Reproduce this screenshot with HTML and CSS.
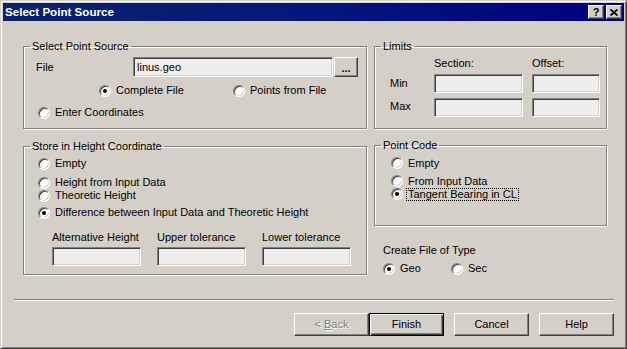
FILE: index.html
```html
<!DOCTYPE html>
<html>
<head>
<meta charset="utf-8">
<link rel="stylesheet" href="styles.css">
</head>
<body>
<div class="window">
  <div class="titlebar">
    <span class="title">Select Point Source</span>
    <div class="caption-btns">
      <span class="cbtn help">?</span>
      <span class="cbtn close"><svg width="8" height="7" viewBox="0 0 8 7"><path d="M0.5 0.5 L7.5 6.5 M7.5 0.5 L0.5 6.5" stroke="#000" stroke-width="1.7" fill="none"/></svg></span>
    </div>
  </div>
  <div class="body">
    <div class="columns">
      <div class="col left">
        <fieldset class="group g-source">
          <legend>Select Point Source</legend>
          <div class="file-row">
            <span class="file-label">File</span>
            <span class="edit file-edit">linus.geo</span>
            <span class="btn browse">...</span>
          </div>
          <div class="opt-row src-opts">
            <label class="opt w-complete"><span class="radio checked"></span><span class="lbl">Complete File</span></label>
            <label class="opt"><span class="radio"></span><span class="lbl">Points from File</span></label>
          </div>
          <div class="opt-row enter-opt">
            <label class="opt"><span class="radio"></span><span class="lbl">Enter Coordinates</span></label>
          </div>
        </fieldset>
        <fieldset class="group g-height">
          <legend>Store in Height Coordinate</legend>
          <div class="opt-row h1"><label class="opt"><span class="radio"></span><span class="lbl">Empty</span></label></div>
          <div class="opt-row h2"><label class="opt"><span class="radio"></span><span class="lbl">Height from Input Data</span></label></div>
          <div class="opt-row h3"><label class="opt"><span class="radio"></span><span class="lbl">Theoretic Height</span></label></div>
          <div class="opt-row h4"><label class="opt"><span class="radio checked"></span><span class="lbl">Difference between Input Data and Theoretic Height</span></label></div>
          <div class="tol-grid">
            <span class="tol-label">Alternative Height</span>
            <span class="tol-label">Upper tolerance</span>
            <span class="tol-label">Lower tolerance</span>
            <span class="edit tol-edit"></span>
            <span class="edit tol-edit"></span>
            <span class="edit tol-edit"></span>
          </div>
        </fieldset>
      </div>
      <div class="col right">
        <fieldset class="group g-limits">
          <legend>Limits</legend>
          <div class="limits-grid">
            <span></span>
            <span class="lim-head">Section:</span>
            <span class="lim-head">Offset:</span>
            <span class="lim-label">Min</span>
            <span class="edit lim-edit"></span>
            <span class="edit lim-edit"></span>
            <span class="lim-label">Max</span>
            <span class="edit lim-edit"></span>
            <span class="edit lim-edit"></span>
          </div>
        </fieldset>
        <fieldset class="group g-code">
          <legend>Point Code</legend>
          <div class="opt-row c1"><label class="opt"><span class="radio"></span><span class="lbl">Empty</span></label></div>
          <div class="opt-row c2"><label class="opt"><span class="radio"></span><span class="lbl">From Input Data</span></label></div>
          <div class="opt-row c3"><label class="opt"><span class="radio checked"></span><span class="lbl focus">Tangent Bearing in CL</span></label></div>
        </fieldset>
        <div class="create">
          <div class="create-title">Create File of Type</div>
          <div class="opt-row create-opts">
            <label class="opt w-geo"><span class="radio checked"></span><span class="lbl">Geo</span></label>
            <label class="opt"><span class="radio"></span><span class="lbl">Sec</span></label>
          </div>
        </div>
      </div>
    </div>
    <div class="sep"></div>
    <div class="buttons">
      <span class="btn push disabled"><span>&lt; <u>B</u>ack</span></span>
      <span class="btn push default">Finish</span>
      <span class="btn push">Cancel</span>
      <span class="btn push">Help</span>
    </div>
  </div>
</div>
</body>
</html>
```

FILE: styles.css
```css
* { box-sizing: border-box; }
html, body { margin: 0; padding: 0; background: #d4d0c8; }
body {
  font-family: "Liberation Sans", Arial, sans-serif;
  font-size: 11px;
  line-height: 13px;
  color: #000;
}
.window {
  width: 627px;
  height: 349px;
  border: 1px solid;
  border-color: #d4d0c8 #404040 #404040 #d4d0c8;
  box-shadow: inset 1px 1px 0 #fff, inset -1px -1px 0 #808080;
  padding: 2px;
  background: #d4d0c8;
  display: flex;
  flex-direction: column;
}
.titlebar {
  height: 18px;
  background: linear-gradient(to right, #0a246a, #04197a 45%, #000080);
  display: flex;
  align-items: center;
  justify-content: space-between;
  padding: 0 2px 0 2px;
}
.title {
  color: #fff;
  font-weight: bold;
  font-size: 11.6px;
  line-height: 18px;
}
.caption-btns { display: flex; gap: 2px; }
.cbtn {
  width: 16px;
  height: 14px;
  background: #d4d0c8;
  border: 1px solid;
  border-color: #fff #404040 #404040 #fff;
  box-shadow: inset -1px -1px 0 #808080;
  display: flex;
  align-items: center;
  justify-content: center;
  font-weight: bold;
  font-size: 11px;
  line-height: 12px;
}
.body {
  flex: 1;
  padding: 19px 10px 0 11px;
  display: flex;
  flex-direction: column;
}
.columns {
  height: 235px;
  padding-left: 9px;
  display: flex;
  gap: 7px;
}
.col { display: flex; flex-direction: column; }
.col.left { width: 344px; gap: 11px; }
.col.right { width: 233px; gap: 10px; }

.group {
  margin: 0;
  padding: 0;
  border: 1px solid #808080;
  box-shadow: inset 1px 1px 0 #fff, 1px 1px 0 #fff;
  min-width: 0;
}
.group legend {
  margin-left: 6px;
  padding: 0 2px;
  line-height: 13px;
  height: 13px;
}
.g-source { height: 89px; }
.g-height { height: 135px; }
.g-limits { height: 89px; }
.g-code { height: 88px; }

.edit {
  display: block;
  background: #eeeeee;
  border: 1px solid;
  border-color: #808080 #fff #fff #808080;
  box-shadow: inset 1px 1px 0 #404040, inset -1px -1px 0 #d4d0c8;
}
.btn {
  display: flex;
  align-items: center;
  justify-content: center;
  background: #d4d0c8;
  border: 1px solid;
  border-color: #fff #404040 #404040 #fff;
  box-shadow: inset -1px -1px 0 #808080;
}

.file-row {
  margin-top: 4px;
  height: 20px;
  display: flex;
  align-items: center;
}
.file-label { width: 109px; padding-left: 12px; }
.file-edit {
  width: 200px;
  height: 20px;
  padding: 3px 0 0 3px;
}
.browse {
  margin-left: 1px;
  width: 24px;
  height: 20px;
  font-weight: bold;
  font-size: 11px;
  padding-top: 2px;
  letter-spacing: 0;
}

.opt-row { height: 13px; display: flex; align-items: center; }
.opt { display: flex; align-items: center; }
.radio {
  position: relative;
  width: 12px;
  height: 12px;
  flex: none;
  border-radius: 50%;
  background: #fff;
  border: 1px solid;
  border-color: #808080 #fff #fff #808080;
  box-shadow: inset 1px 1px 0 #404040, inset -1px -1px 0 #d4d0c8;
}
.radio.checked::after {
  content: "";
  position: absolute;
  left: 3px;
  top: 3px;
  width: 4px;
  height: 4px;
  border-radius: 50%;
  background: #000;
}
.lbl {
  margin-left: 3px;
  border: 1px solid transparent;
  padding: 0 1px;
  line-height: 11px;
  white-space: nowrap;
}
.lbl.focus { border: 1px dotted #000; }

.src-opts { margin-top: 7px; padding-left: 75px; }
.w-complete { width: 134px; }
.enter-opt { margin-top: 9px; padding-left: 14px; }

.h1 { margin-top: 4px; padding-left: 14px; }
.h2 { margin-top: 6px; padding-left: 14px; }
.h3 { margin-top: 0; padding-left: 14px; }
.h4 { margin-top: 4px; padding-left: 14px; }
.tol-grid {
  margin-top: 12px;
  padding-left: 28px;
  display: grid;
  grid-template-columns: 89px 89px 89px;
  grid-template-rows: 13px 19px;
  column-gap: 16px;
  row-gap: 3px;
}
.tol-edit { height: 19px; }

.limits-grid {
  margin-top: 4px;
  display: grid;
  grid-template-columns: 50px 89px 68px;
  grid-template-rows: 13px 19px 19px;
  column-gap: 9px;
  row-gap: 4px;
}
.limits-grid .lim-edit:nth-child(n+8) { margin-top: 1px; }
.lim-label { padding-left: 15px; align-self: center; }
.lim-edit { height: 19px; }

.c1 { margin-top: 5px; padding-left: 16px; }
.c2 { margin-top: 5px; padding-left: 16px; }
.c3 { margin-top: 0; padding-left: 16px; }

.create { padding-left: 9px; }
.create-title { margin-top: 8px; }
.create-opts { margin-top: 5px; }
.w-geo { width: 68px; }

.sep {
  margin-top: 24px;
  height: 2px;
  border-top: 1px solid #808080;
  border-bottom: 1px solid #fff;
}
.buttons {
  margin-top: 12px;
  display: flex;
  justify-content: flex-end;
}
.push {
  width: 75px;
  height: 23px;
}
.push + .push { margin-left: 10px; }
.push.disabled + .push { margin-left: 0; }
.push.disabled {
  color: #808080;
  text-shadow: 1px 1px 0 #fff;
}
.push.default {
  border: 1px solid #000;
  box-shadow: inset 1px 1px 0 #fff, inset -1px -1px 0 #404040, inset -2px -2px 0 #808080;
}
```
